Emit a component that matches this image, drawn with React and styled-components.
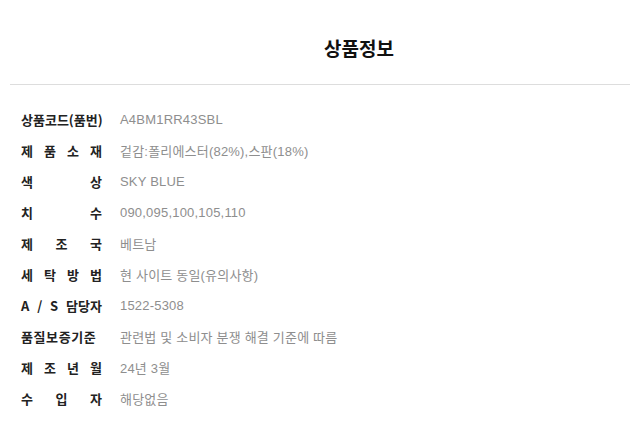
import React from "react";
import styled, { createGlobalStyle } from "styled-components";

const GlobalStyle = createGlobalStyle`
  html, body {
    margin: 0;
    padding: 0;
    background: #fff;
  }
  body {
    font-family: "Noto Sans CJK KR", "Noto Sans", sans-serif;
  }
`;

const Container = styled.div`
  padding-left: 10px;
`;

const Title = styled.h2`
  margin: 0;
  padding: 35px 0 23px 78px;
  text-align: center;
  font-size: 19px;
  font-weight: 700;
  color: #111;
  line-height: 26px;
  border-bottom: 1px solid #ddd;
`;

const List = styled.dl`
  margin: 0;
  padding: 23px 0 0 11px;
  display: flex;
  flex-direction: column;
  gap: 9px;
`;

const Row = styled.div`
  display: flex;
  align-items: center;
  height: 22px;
  gap: 18px;
`;

const Label = styled.dt`
  width: 81px;
  font-size: 13px;
  font-weight: 700;
  color: #222;
  text-align: justify;
  text-align-last: justify;
  white-space: nowrap;
  letter-spacing: ${(p) => (p.$spread ? "0.6px" : "0")};
`;

const Value = styled.dd`
  margin: 0;
  font-family: "Liberation Sans", "Noto Sans CJK KR", sans-serif;
  font-size: 13px;
  font-weight: 400;
  letter-spacing: 0.2px;
  color: #8e8e8e;
`;

const rows = [
  ["상품코드(품번)", "A4BM1RR43SBL"],
  ["제 품 소 재", "겉감:폴리에스터(82%),스판(18%)"],
  ["색 상", "SKY BLUE"],
  ["치 수", "090,095,100,105,110"],
  ["제 조 국", "베트남"],
  ["세 탁 방 법", "현 사이트 동일(유의사항)"],
  ["A / S 담당자", "1522-5308"],
  ["품질보증기준", "관련법 및 소비자 분쟁 해결 기준에 따름", true],
  ["제 조 년 월", "24년 3월"],
  ["수 입 자", "해당없음"],
];

const App = () => {
  return (
    <>
      <GlobalStyle />
      <Container>
        <Title>상품정보</Title>
        <List>
          {rows.map(([label, value, spread]) => (
            <Row key={label}>
              <Label $spread={spread}>{label}</Label>
              <Value>{value}</Value>
            </Row>
          ))}
        </List>
      </Container>
    </>
  );
};

export default App;
